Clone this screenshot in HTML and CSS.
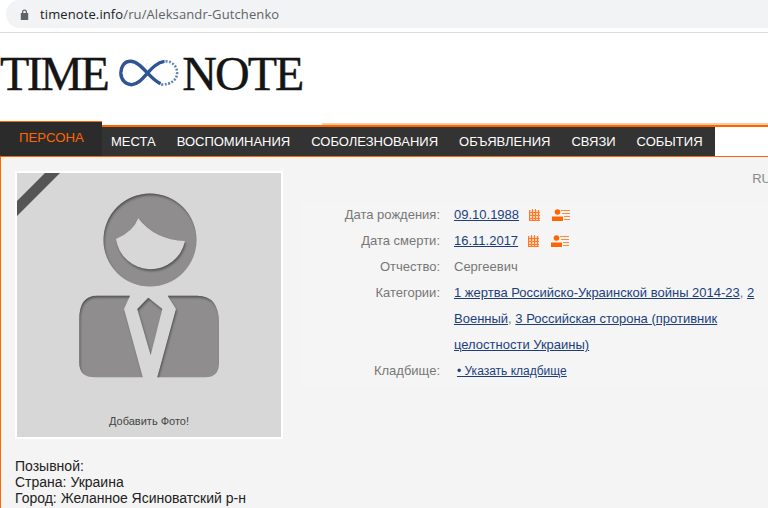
FILE: index.html
```html
<!DOCTYPE html>
<html lang="ru">
<head>
  <meta charset="UTF-8">
  <meta name="viewport" content="width=device-width, initial-scale=1.0">
  <title>Aleksandr Gutchenko - Time Note</title>
  <link rel="stylesheet" href="styles.css">
</head>
<body>
  <!-- Browser address bar -->
  <div class="browser-bar">
    <div class="address">
      <svg class="lock" width="9" height="11" viewBox="0 0 9 11">
        <path d="M2 4V3a2.500 2.500 0 0 1 5 0v1h1.200v7H.8V4zM3.200 4h2.600V3a1.300 1.300 0 0 0-2.600 0z" fill="#5f6368"/>
      </svg>
      <span class="domain">timenote.info</span><span class="path">/ru/Aleksandr-Gutchenko</span>
    </div>
  </div>

  <!-- Logo -->
  <div class="logo">
    <span class="logo-time">TIME</span>
    <svg class="logo-mark" width="64" height="32" viewBox="116 58 66 32">
      <path d="M161 85C150 81 141 62 130 62C123 62 120 68 120 74C120 81 125 86 131 86C143 86 150 64 165 62" fill="none" stroke="#2f5496" stroke-width="3.600"/>
      <path d="M166 62C174 62 178 68 178 74C178 81 172 86 161 86" fill="none" stroke="#5d80b6" stroke-width="2.600" stroke-dasharray="2 1.600"/>
      <path d="M147 60v12M126 74h-6M147 80v8M158 60v3" fill="none" stroke="#d5dbe6" stroke-width="1" stroke-dasharray="1 3"/>
    </svg>
    <span class="logo-note">NOTE</span>
  </div>

  <!-- Tabs -->
  <div class="nav">
    <a class="nav-active">ПЕРСОНА</a>
    <div class="nav-main">
      <div class="nav-stripe"></div>
      <div class="nav-row">
        <div class="nav-items">
          <a>МЕСТА</a>
          <a>ВОСПОМИНАНИЯ</a>
          <a>СОБОЛЕЗНОВАНИЯ</a>
          <a>ОБЪЯВЛЕНИЯ</a>
          <a>СВЯЗИ</a>
          <a>СОБЫТИЯ</a>
        </div>
      </div>
    </div>
  </div>

  <div class="content">
    <div class="profile">
      <!-- Photo placeholder -->
      <div class="photo">
        <svg class="photo-art" width="264" height="264" viewBox="0 0 264 264">
          <defs>
            <filter id="inner" x="-10%" y="-10%" width="120%" height="120%">
              <feGaussianBlur in="SourceAlpha" stdDeviation="1.200" result="blur"/>
              <feOffset in="blur" dx="0.5" dy="1.500" result="moved"/>
              <feComposite in="SourceAlpha" in2="moved" operator="out" result="edge"/>
              <feFlood flood-color="#3c3c3c" flood-opacity="0.8"/>
              <feComposite in2="edge" operator="in" result="shade"/>
              <feMerge>
                <feMergeNode in="SourceGraphic"/>
                <feMergeNode in="shade"/>
              </feMerge>
            </filter>
          </defs>
          <polygon points="0,43 43,0 28,0 0,28" fill="#555"/>
          <g fill="#8f8d8e" fill-rule="evenodd" filter="url(#inner)">
            <path d="M133 20.500a46.500 46.500 0 1 0 0 93a46.500 46.500 0 1 0 0-93zM99 66Q116 59 121.300 45.300Q138 67 168 68A35 35 0 0 1 99 66Z"/>
            <path d="M80 122.700H113L107 136L125.700 204.300H78Q62.300 204.300 62.300 190V146Q62.300 122.700 80 122.700Z"/>
            <path d="M150.700 122.700H180Q202 122.700 202 150V190Q202 204.300 188 204.300H140.300L159 136Z"/>
            <path d="M131.300 124.700L145.300 136L133.700 182L120.300 136Z"/>
          </g>
        </svg>
        <span class="photo-add">Добавить Фото!</span>
      </div>

      <div class="info">
        <div class="lang">RU</div>
        <div class="facts">
          <div class="fact-label">Дата рождения:</div>
          <div class="fact-value">
            <a class="link">09.10.1988</a>
            <svg class="ico-cal" width="12" height="12" viewBox="0 0 12 12">
              <path d="M0 1h11v11H0z" fill="#ffd3b5"/>
              <path d="M0.500 1v11M3.500 0v12M6.500 0v12M9.500 1v11M0 3.500h11M0 6.500h11M0 9.500h11M0 11.500h11" stroke="#ff7a2a" stroke-width="1"/>
            </svg>
            <svg class="ico-person" width="18" height="12" viewBox="0 0 18 12">
              <circle cx="5.500" cy="3" r="2.800" fill="#ff6600"/>
              <path d="M0 12V7.500h11V12z" fill="#ff6600"/>
              <path d="M9 1.500h9M10 4.500h8M12 7.500h6M12 10.500h6" stroke="#ff8a3d" stroke-width="1.200"/>
            </svg>
          </div>
          <div class="fact-label">Дата смерти:</div>
          <div class="fact-value">
            <a class="link">16.11.2017</a>
            <svg class="ico-cal" width="12" height="12" viewBox="0 0 12 12">
              <path d="M0 1h11v11H0z" fill="#ffd3b5"/>
              <path d="M0.500 1v11M3.500 0v12M6.500 0v12M9.500 1v11M0 3.500h11M0 6.500h11M0 9.500h11M0 11.500h11" stroke="#ff7a2a" stroke-width="1"/>
            </svg>
            <svg class="ico-person" width="18" height="12" viewBox="0 0 18 12">
              <circle cx="5.500" cy="3" r="2.800" fill="#ff6600"/>
              <path d="M0 12V7.500h11V12z" fill="#ff6600"/>
              <path d="M9 1.500h9M10 4.500h8M12 7.500h6M12 10.500h6" stroke="#ff8a3d" stroke-width="1.200"/>
            </svg>
          </div>
          <div class="fact-label">Отчество:</div>
          <div class="fact-value plain">Сергеевич</div>
          <div class="fact-label">Категории:</div>
          <div class="fact-value plain"><a class="link">1 жертва Российско-Украинской войны 2014-23</a>, <a class="link">2 Военный</a>, <a class="link">3 Российская сторона (противник целостности Украины)</a></div>
          <div class="fact-label">Кладбище:</div>
          <div class="fact-value"><a class="link link-small">• Указать кладбище</a></div>
        </div>
      </div>
    </div>

    <div class="details">
      Позывной:<br>
      Страна: Украина<br>
      Город: Желанное Ясиноватский р-н
    </div>
  </div>
</body>
</html>
```

FILE: styles.css
```css
/* Basic page */
html {
  overflow: hidden;
  height: 100%;
  background: #f4f4f4;
}
body {
  margin: 0;
  width: 790px;
  height: 508px;
  overflow: hidden;
  background: #fff;
  color: #222;
  font-family: "Liberation Sans", Arial, sans-serif;
}

/* Browser bar */
.browser-bar {
  height: 32px;
  padding-left: 6px;
  border-bottom: 1px solid #dadce0;
  background: #fff;
}
.address {
  display: flex;
  align-items: center;
  height: 28px;
  padding-left: 14px;
  border-radius: 14px 0 0 14px;
  background: #f1f3f4;
  font-family: "Open Sans", sans-serif;
  font-size: 13px;
  letter-spacing: 0.11px;
}
.lock {
  margin-right: 11px;
}
.domain {
  color: #202124;
}
.path {
  color: #5f6368;
}

/* Logo */
.logo {
  display: flex;
  align-items: center;
  height: 88px;
  padding-bottom: 8px;
  box-sizing: border-box;
  color: #151515;
  font-family: "Liberation Serif", serif;
  font-size: 48px;
  -webkit-text-stroke: 0.4px #151515;
}
.logo-time {
  letter-spacing: -2.500px;
}
.logo-mark {
  margin: 0 1px 0 10px;
}
.logo-note {
  letter-spacing: -2px;
}

/* Tabs */
.nav {
  display: flex;
  align-items: stretch;
  height: 35px;
  border-bottom: 1px solid #ff6600;
  font-size: 13px;
}
.nav-active {
  width: 102px;
  padding: 8px 0 0 19px;
  box-sizing: border-box;
  border-top: 1px solid #ff6600;
  background: #2b2b2b;
  color: #ff6600;
  font-size: 13.200px;
}
.nav-main {
  flex: 1;
  display: flex;
  flex-direction: column;
}
.nav-stripe {
  height: 6px;
  background:
    linear-gradient(#ff6600, #ff6600) left bottom / 100% 2px no-repeat,
    linear-gradient(#ffc9a3, #ffc9a3) right 2px / calc(100% - 220px) 2px no-repeat;
}
.nav-row {
  flex: 1;
  display: flex;
}
.nav-items {
  display: flex;
  align-items: center;
  gap: 21px;
  padding: 0 12px 0 9px;
  background: #333;
  color: #fff;
}

/* Content */
.content {
  height: 351px;
  padding: 14px 0 0 14px;
  border-left: 1px solid #ff6600;
  background: #f4f4f4;
}
.profile {
  display: flex;
}
.photo {
  position: relative;
  width: 264px;
  height: 264px;
  border: 2px solid #fff;
  background: #d7d7d7;
}
.photo-art {
  display: block;
}
.photo-add {
  position: absolute;
  left: 0;
  right: 0;
  bottom: 10px;
  color: #444;
  font-size: 11px;
  text-align: center;
}
.info {
  flex: 1;
  margin-left: 17px;
}
.lang {
  height: 31px;
  padding-right: 19px;
  color: #888;
  font-size: 13px;
  line-height: 15px;
  text-align: right;
}
.facts {
  display: grid;
  grid-template-columns: 140px 310px;
  column-gap: 14px;
  background: #f5f5f5;
  padding-bottom: 3px;
  font-size: 13px;
  line-height: 26px;
}
.fact-label {
  color: #777;
  text-align: right;
}
.fact-value {
  color: #777;
  white-space: nowrap;
}
.fact-value.plain {
  white-space: normal;
}
.link {
  color: #1c3f7c;
  text-decoration: underline;
}
.link-small {
  margin-left: 3px;
  font-size: 12px;
}
.ico-cal {
  margin-left: 6px;
  vertical-align: -2px;
}
.ico-person {
  margin-left: 8px;
  vertical-align: -2px;
}

/* Text under the photo */
.details {
  margin-top: 19px;
  font-size: 14px;
  line-height: 16px;
}
```
